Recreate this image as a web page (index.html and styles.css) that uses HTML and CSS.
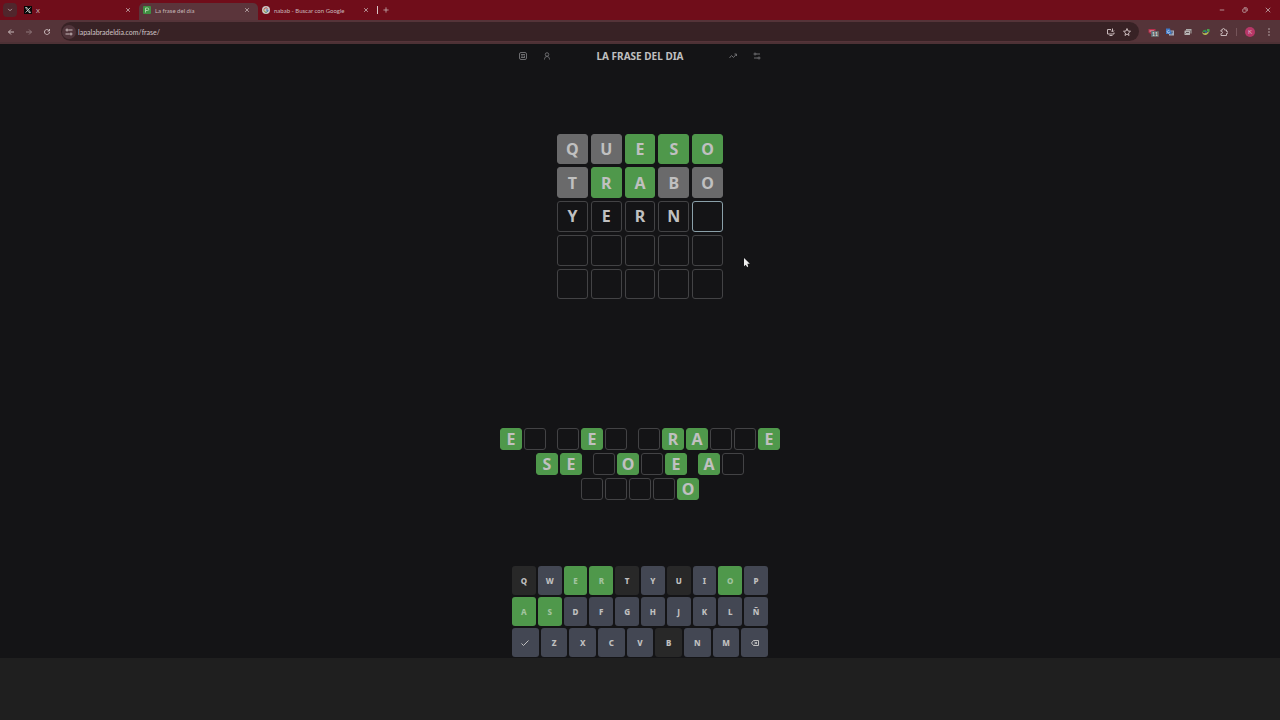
FILE: index.html
```html
<!DOCTYPE html>
<html lang="es">
  <head>
    <meta charset="UTF-8" />
    <meta name="viewport" content="width=device-width, initial-scale=1.0" />
    <title>La frase del día</title>
    <link rel="stylesheet" href="styles.css" />
  </head>
  <body>
    <header class="browser">
      <div class="tabstrip">
        <button class="tab-search" aria-label="Buscar pestañas">
          <svg class="icon-s" viewBox="0 0 16 16"><path d="M3 5l5 5 5-5" /></svg>
        </button>
        <div class="tab">
          <svg class="favicon" viewBox="0 0 16 16"><rect width="16" height="16" fill="#080808" /><path d="M3 3h3l7 10h-3zM13 3L3 13" fill="none" stroke="#ddd" stroke-width="1.5" /></svg>
          <span class="tab-title">X</span>
          <button class="close" aria-label="Cerrar"><svg class="icon-s" viewBox="0 0 16 16"><path d="M3 3l10 10M13 3L3 13" /></svg></button>
        </div>
        <div class="tab active">
          <svg class="favicon" viewBox="0 0 16 16"><rect width="16" height="16" rx="2" fill="#3f8f42" /><path d="M5 13V4h4a2.5 2.5 0 0 1 0 5H5" fill="none" stroke="#a9d0a6" stroke-width="2" /></svg>
          <span class="tab-title">La frase del día</span>
          <button class="close" aria-label="Cerrar"><svg class="icon-s" viewBox="0 0 16 16"><path d="M3 3l10 10M13 3L3 13" /></svg></button>
        </div>
        <div class="tab">
          <svg class="favicon" viewBox="0 0 16 16"><circle cx="8" cy="8" r="8" fill="#c9c4c4" /><path d="M11 5a4.200 4.200 0 0 0-7 2" fill="none" stroke="#b5463e" stroke-width="2" /><path d="M4 7a4 4 0 0 0 2 5" fill="none" stroke="#b39a45" stroke-width="2" /><path d="M6 12a4 4 0 0 0 4 0" fill="none" stroke="#468a50" stroke-width="2" /><path d="M10 12a4 4 0 0 0 2-4H8" fill="none" stroke="#4673b0" stroke-width="2" /></svg>
          <span class="tab-title">nabab - Buscar con Google</span>
          <button class="close" aria-label="Cerrar"><svg class="icon-s" viewBox="0 0 16 16"><path d="M3 3l10 10M13 3L3 13" /></svg></button>
        </div>
        <button class="new-tab" aria-label="Nueva pestaña"><svg class="icon-s" viewBox="0 0 16 16"><path d="M8 1v14M1 8h14" /></svg></button>
        <div class="window-buttons">
          <button aria-label="Minimizar"><svg class="icon-s" viewBox="0 0 16 16"><path d="M2 8h12" /></svg></button>
          <button aria-label="Restaurar"><svg class="icon-s" viewBox="0 0 16 16"><rect x="2" y="5" width="9" height="9" rx="2" /><path d="M5 2h6a3 3 0 0 1 3 3v6" /></svg></button>
          <button aria-label="Cerrar ventana"><svg class="icon-s" viewBox="0 0 16 16"><path d="M2 2l12 12M14 2L2 14" /></svg></button>
        </div>
      </div>
      <div class="toolbar">
        <div class="nav-buttons">
          <button aria-label="Atrás"><svg class="icon" viewBox="0 0 16 16"><path d="M14 8H3M8 3L3 8l5 5" /></svg></button>
          <button class="dim" aria-label="Adelante"><svg class="icon" viewBox="0 0 16 16"><path d="M2 8h11M8 3l5 5-5 5" /></svg></button>
          <button aria-label="Recargar"><svg class="icon" viewBox="0 0 16 16"><path d="M13 8a5 5 0 1 1-2-4l2 2M13 2v4H9" /></svg></button>
        </div>
        <div class="omnibox">
          <button class="site-info" aria-label="Información del sitio"><svg class="icon" viewBox="0 0 16 16"><path d="M7 4h8M1 12h8" /><circle cx="4" cy="4" r="2" /><circle cx="12" cy="12" r="2" /></svg></button>
          <input class="url" type="text" aria-label="Dirección" value="lapalabradeldia.com/frase/" />
          <button aria-label="Instalar"><svg class="icon" viewBox="0 0 16 16"><path d="M8 3H1v9h13V9M5 15h6M11 1v6M8 5l3 3 3-3" /></svg></button>
          <button aria-label="Favoritos"><svg class="icon" viewBox="0 0 16 16"><path d="M8 1l2 5 5 .5-4 3.500 1 5-4-3-4 3 1-5-4-3.500L6 6z" /></svg></button>
        </div>
        <div class="extensions">
          <button class="blocker" aria-label="Bloqueador"><svg class="icon color" viewBox="0 0 16 16"><path d="M1 2h14v7l-7 5-7-5z" fill="#b52e4b" /><path d="M3 6h9" stroke="#d9b6bb" stroke-width="2" /></svg><span class="count">11</span></button>
          <button aria-label="Traductor"><svg class="icon color" viewBox="0 0 16 16"><rect x="6" y="5" width="10" height="10" fill="#a3aaba" /><path d="M0 1h8l3 11H0z" fill="#3f78c6" /><path d="M7 6a2.500 2.500 0 1 0 0 3H5" fill="none" stroke="#d2dcec" stroke-width="1.5" /><path d="M10 8h4M12 8c0 3-1 4-2 5" fill="none" stroke="#4a5c7c" /></svg></button>
          <button aria-label="Capturas"><svg class="icon color" viewBox="0 0 16 16"><path d="M4 2h11v9h-2V5H4z" fill="#aaa" /><rect x="1" y="5" width="11" height="9" rx="1" fill="#b7b3b3" /><path d="M3 11l3-3 2 2 2-2" fill="none" stroke="#605254" /></svg></button>
          <button aria-label="Descargas"><svg class="icon color" viewBox="0 0 16 16"><path d="M1 8c0-3 4-5 8-4l-2 4z" fill="#328c45" /><path d="M0 8c4 4 9 3 13-2 2 4-3 8-7 8-3 0-6-3-6-6z" fill="#b0b653" /><circle cx="8" cy="8" r="2" fill="#2b6fa5" /><path d="M10 2h5v6h-2l-3-2z" fill="#46a14d" /></svg></button>
          <button aria-label="Extensiones"><svg class="icon" viewBox="0 0 16 16"><path d="M2 4h3V3a2 2 0 0 1 4 0v1h4v3h1a2 2 0 0 1 0 4h-1v4H2v-4h1a2 2 0 0 0 0-4H2z" /></svg></button>
          <span class="separator"></span>
          <button class="profile" aria-label="Perfil">K</button>
          <button class="more" aria-label="Menú"><svg class="icon dots" viewBox="0 0 16 16"><circle cx="8" cy="2" r="1.500" /><circle cx="8" cy="8" r="1.500" /><circle cx="8" cy="14" r="1.500" /></svg></button>
        </div>
      </div>
    </header>

    <main class="game">
      <div class="game-header">
        <nav class="menu">
          <button aria-label="Juegos"><svg class="icon" viewBox="0 0 16 16"><rect x="1" y="1" width="14" height="14" rx="3" /><path d="M4 5h8M4 8h5M4 11h8M11 7v3" /></svg></button>
          <button aria-label="Cuenta"><svg class="icon" viewBox="0 0 16 16"><circle cx="8" cy="5" r="3.500" /><path d="M3 15c0-4 2-6 5-6s5 2 5 6" /></svg></button>
        </nav>
        <h1>LA FRASE DEL DIA</h1>
        <nav class="menu">
          <button aria-label="Estadísticas"><svg class="icon" viewBox="0 0 16 16"><path d="M1 12l4-5 4 4 6-7M11 4h4v4" /></svg></button>
          <button aria-label="Ajustes"><svg class="icon" viewBox="0 0 16 16"><path d="M5 4h9M2 12h8" /><circle cx="4" cy="4" r="2" /><circle cx="12" cy="12" r="2" /></svg></button>
        </nav>
      </div>

      <section class="board-area">
        <div class="board">
          <div class="tile absent">Q</div>
          <div class="tile absent">U</div>
          <div class="tile correct">E</div>
          <div class="tile correct">S</div>
          <div class="tile correct">O</div>
          <div class="tile absent">T</div>
          <div class="tile correct">R</div>
          <div class="tile correct">A</div>
          <div class="tile absent">B</div>
          <div class="tile absent">O</div>
          <div class="tile">Y</div>
          <div class="tile">E</div>
          <div class="tile">R</div>
          <div class="tile">N</div>
          <div class="tile current"></div>
          <div class="tile"></div>
          <div class="tile"></div>
          <div class="tile"></div>
          <div class="tile"></div>
          <div class="tile"></div>
          <div class="tile"></div>
          <div class="tile"></div>
          <div class="tile"></div>
          <div class="tile"></div>
          <div class="tile"></div>
        </div>
        <svg class="cursor" viewBox="0 0 8 12"><path d="M1 0v10l2-2 2 3 1-1-1-3h3z" fill="#eee" /></svg>
      </section>

      <section class="phrase">
        <div class="line">
          <div class="word"><span class="tile correct">E</span><span class="tile"></span></div>
          <div class="word"><span class="tile"></span><span class="tile correct">E</span><span class="tile"></span></div>
          <div class="word"><span class="tile"></span><span class="tile correct">R</span><span class="tile correct">A</span><span class="tile"></span><span class="tile"></span><span class="tile correct">E</span></div>
        </div>
        <div class="line">
          <div class="word"><span class="tile correct">S</span><span class="tile correct">E</span></div>
          <div class="word"><span class="tile"></span><span class="tile correct">O</span><span class="tile"></span><span class="tile correct">E</span></div>
          <div class="word"><span class="tile correct">A</span><span class="tile"></span></div>
        </div>
        <div class="line">
          <div class="word"><span class="tile"></span><span class="tile"></span><span class="tile"></span><span class="tile"></span><span class="tile correct">O</span></div>
        </div>
      </section>

      <section class="keyboard">
        <div class="key-row">
          <button class="key used">Q</button>
          <button class="key">W</button>
          <button class="key found">E</button>
          <button class="key found">R</button>
          <button class="key used">T</button>
          <button class="key">Y</button>
          <button class="key used">U</button>
          <button class="key">I</button>
          <button class="key found">O</button>
          <button class="key">P</button>
        </div>
        <div class="key-row">
          <button class="key found">A</button>
          <button class="key found">S</button>
          <button class="key">D</button>
          <button class="key">F</button>
          <button class="key">G</button>
          <button class="key">H</button>
          <button class="key">J</button>
          <button class="key">K</button>
          <button class="key">L</button>
          <button class="key">Ñ</button>
        </div>
        <div class="key-row">
          <button class="key" aria-label="Enviar"><svg class="icon" viewBox="0 0 16 16"><path d="M1 9l4 4L15 3" /></svg></button>
          <button class="key">Z</button>
          <button class="key">X</button>
          <button class="key">C</button>
          <button class="key">V</button>
          <button class="key used">B</button>
          <button class="key">N</button>
          <button class="key">M</button>
          <button class="key" aria-label="Borrar"><svg class="icon" viewBox="0 0 16 16"><path d="M5 3h10v10H5L1 8zM7 6l5 4M12 6l-5 4" /></svg></button>
        </div>
      </section>
    </main>
    <footer></footer>
  </body>
</html>
```

FILE: styles.css
```css
* {
  box-sizing: border-box;
}

body {
  margin: 0;
  min-height: 100vh;
  display: flex;
  flex-direction: column;
  background-color: #141416;
  color: #c0c0c0;
  font-family: "Noto Sans", sans-serif;
}

button {
  display: flex;
  align-items: center;
  justify-content: center;
  padding: 0;
  border: none;
  background: none;
  color: inherit;
  font-family: inherit;
  cursor: pointer;
}

svg {
  display: block;
  flex-shrink: 0;
}

.icon,
.icon-s {
  width: 8px;
  height: 8px;
  fill: none;
  stroke: currentColor;
  stroke-width: 2;
}

.icon-s {
  width: 6px;
  height: 6px;
}

.icon.color {
  stroke: none;
}

.icon.dots {
  fill: currentColor;
  stroke: none;
}

/* browser */
.browser {
  color: #c8b8ba;
  font-family: "Lato", sans-serif;
}

.tabstrip {
  display: flex;
  align-items: center;
  height: 20px;
  padding-left: 3px;
  background-color: #700d1a;
}

.tab-search {
  width: 14px;
  height: 14px;
  margin-right: 3px;
  border-radius: 4px;
  background-color: #50262c;
}

.tab {
  display: flex;
  align-items: center;
  gap: 4px;
  width: 119px;
  height: 20px;
  padding: 0 8px 0 4px;
  font-size: 6px;
}

.tab.active {
  height: 17px;
  align-self: flex-end;
  padding-bottom: 3px;
  border-radius: 5px 5px 0 0;
  background-color: #5b353b;
}

.favicon {
  width: 8px;
  height: 8px;
}

.tab-title {
  flex: 1;
  white-space: nowrap;
}

.new-tab {
  height: 8px;
  padding-left: 5px;
  border-left: 1px solid #d8c4c6;
}

.window-buttons {
  display: flex;
  gap: 17px;
  margin-left: auto;
  padding-right: 9px;
}

.toolbar {
  display: flex;
  align-items: center;
  height: 24px;
  padding: 1px 7px 0;
  border-bottom: 2px solid #4d3135;
  background-color: #553439;
}

.nav-buttons {
  display: flex;
  gap: 10px;
  margin-right: 10px;
}

.dim {
  opacity: 0.5;
}

.omnibox {
  flex: 1;
  display: flex;
  align-items: center;
  gap: 8px;
  height: 19px;
  padding: 0 8px 0 1px;
  border-radius: 10px;
  background-color: #382225;
}

.site-info {
  width: 14px;
  height: 14px;
  border-radius: 7px;
  background-color: #50343a;
}

.url {
  flex: 1;
  margin-left: -6px;
  padding: 0;
  border: none;
  outline: none;
  background: none;
  color: #d0c4c5;
  font-family: inherit;
  font-size: 7px;
}

.extensions {
  display: flex;
  align-items: center;
  gap: 10px;
  margin-left: 9px;
}

.blocker {
  position: relative;
}

.count {
  position: absolute;
  left: 3px;
  top: 3px;
  padding: 0 1px;
  border-radius: 1px;
  background-color: #64686a;
  color: #ddd;
  font-size: 5px;
  font-weight: bold;
  line-height: 6px;
}

.separator {
  width: 1px;
  height: 8px;
  margin: 0 -2px;
  background-color: #755459;
}

.profile {
  width: 10px;
  height: 10px;
  border-radius: 5px;
  background-color: #b73767;
  color: #e0b8c6;
  font-size: 6px;
}

/* game */
.game {
  flex: 1;
  display: flex;
  flex-direction: column;
  align-items: center;
}

.game-header {
  display: flex;
  align-items: center;
  justify-content: space-between;
  width: 100%;
  max-width: 256px;
  height: 24px;
  padding: 0 7px;
}

.menu {
  display: flex;
  gap: 16px;
  color: #6c6c6f;
}

h1 {
  margin: 0;
  font-size: 10px;
  font-weight: bold;
}

.board-area {
  position: relative;
  flex: 1;
  display: flex;
  align-items: center;
}

.board {
  display: grid;
  grid-template-columns: repeat(5, 1fr);
  grid-auto-rows: 1fr;
  gap: 3px;
  width: 166px;
  height: 166px;
  margin-bottom: 63px;
}

.tile {
  display: flex;
  align-items: center;
  justify-content: center;
  border: 1px solid #434345;
  border-radius: 3px;
  font-size: 16px;
  font-weight: bold;
  line-height: 20px;
}

.absent {
  border-color: #6a6a6b;
  background-color: #6a6a6b;
}

.correct {
  border-color: #4f984b;
  background-color: #4f984b;
}

.current {
  border-color: #8aa0a9;
}

.cursor {
  position: absolute;
  left: 186px;
  top: 190px;
  width: 7px;
  height: 10px;
}

.phrase {
  display: flex;
  flex-direction: column;
  gap: 3px;
  padding-bottom: 66px;
}

.line {
  display: flex;
  justify-content: center;
  gap: 11px;
}

.word {
  display: flex;
  gap: 2px;
}

.word .tile {
  width: 22px;
  height: 22px;
}

.keyboard {
  display: flex;
  flex-direction: column;
  gap: 2px;
  width: 100%;
  max-width: 256px;
  padding-bottom: 1px;
}

.key-row {
  display: flex;
  gap: 2px;
}

.key {
  flex: 1;
  height: 29px;
  border-radius: 3px;
  background-color: #434753;
  font-size: 8px;
  font-weight: 800;
}

.used {
  background-color: #282828;
}

.found {
  background-color: #4f984b;
  color: #a2c4a0;
}

footer {
  height: 62px;
  background-color: #1f1f1f;
}
```
